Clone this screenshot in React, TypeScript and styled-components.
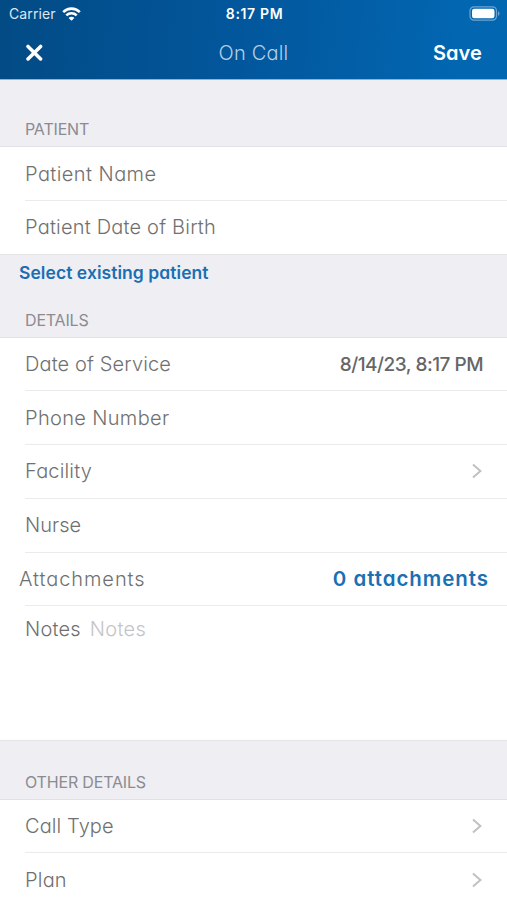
import React from "react";
import styled, { createGlobalStyle } from "styled-components";

const GlobalStyle = createGlobalStyle`
  * { box-sizing: border-box; }
  body { margin: 0; background: #fff; }
`;

const Screen = styled.div`
  width: 507px;
  height: 900px;
  overflow: hidden;
  display: flex;
  flex-direction: column;
  background: #fff;
  font-family: Inter, "Open Sans", sans-serif;
  font-feature-settings: "cv11";
  white-space: nowrap;
`;

const Header = styled.header`
  flex: none;
  height: 80px;
  color: #fff;
  background: linear-gradient(95deg, #024b85 0%, #02569b 45%, #0266b1 90%);
  border-bottom: 1px solid #8fb3d2;
`;

const StatusBar = styled.div`
  height: 27px;
  padding: 0 7px 0 9px;
  display: grid;
  grid-template-columns: 1fr auto 1fr;
  align-items: center;
  font-size: 14px;
  font-feature-settings: normal;
`;

const Carrier = styled.div`
  display: flex;
  align-items: center;
  gap: 6px;
  letter-spacing: 0.1px;
  color: #dce8f3;
`;

const Clock = styled.div`
  font-weight: 600;
  letter-spacing: 0.65px;
`;

const Battery = styled.svg`
  justify-self: end;
`;

const NavBar = styled.nav`
  height: 52px;
  padding: 0 25px;
  display: grid;
  grid-template-columns: 1fr auto 1fr;
  align-items: center;
  font-size: 20px;
`;

const Title = styled.div`
  font-weight: 300;
  letter-spacing: 0.2px;
  color: #b5cfe6;
`;

const Save = styled.div`
  justify-self: end;
  font-weight: 600;
  letter-spacing: 0.1px;
`;

const SectionHeader = styled.div<{ $height: number }>`
  flex: none;
  height: ${(p) => p.$height}px;
  padding: 0 0 7px 25px;
  display: flex;
  align-items: flex-end;
  background: #efeef3;
  border-bottom: 1px solid #e2e2e5;
  color: #8b8b90;
  font-size: 16px;
  line-height: 20px;
  letter-spacing: -0.17px;
  font-feature-settings: normal;
`;

const Existing = styled.div`
  flex: none;
  height: 37px;
  padding-left: 19px;
  background: #efeef3;
  border-top: 1px solid #e4e4e7;
  color: #196fb3;
  font-size: 17.5px;
  font-weight: 600;
  line-height: 36px;
  letter-spacing: 0.06px;
`;

const List = styled.div`
  flex: none;
  padding-left: 25px;
`;

const Row = styled.div<{ $height?: number }>`
  height: ${(p) => p.$height ?? 53.75}px;
  padding-right: 24px;
  display: flex;
  align-items: center;
  justify-content: space-between;
  font-size: 20px;
  & + & { border-top: 1px solid #ebebed; }
`;

const Label = styled.span<{ $spacing: number; $outdent?: boolean }>`
  color: #707070;
  font-weight: 300;
  letter-spacing: ${(p) => p.$spacing}px;
  margin-left: ${(p) => (p.$outdent ? -6 : 0)}px;
`;

const DateValue = styled.span`
  padding-top: 1px;
  color: #666;
  font-size: 19px;
  font-weight: 500;
  letter-spacing: -0.5px;
`;

const LinkValue = styled.span`
  margin-right: -6px;
  color: #1a70b3;
  font-size: 20.5px;
  font-weight: 600;
  letter-spacing: 0.95px;
`;

const NotesRow = styled(Row)`
  height: 134.6px;
  padding-top: 11px;
  justify-content: flex-start;
  align-items: flex-start;
  gap: 9px;
  line-height: 24px;
`;

const Placeholder = styled.span`
  color: #c4c4c8;
  font-weight: 300;
  letter-spacing: 0.3px;
  font-feature-settings: normal;
`;

const OtherHeader = styled(SectionHeader)`
  border-top: 1px solid #e4e4e7;
`;

const Chevron = () => (
  <svg width="12" height="16" viewBox="0 0 12 16" fill="none" stroke="#c1c1c4" strokeWidth="2">
    <path d="M2 1.4 9.4 8 2 14.6" />
  </svg>
);

const Wifi = () => (
  <svg width="19" height="14" viewBox="0 0 19 14" fill="none" stroke="#fff" strokeWidth="2.6">
    <path d="M1.2 5.1C5.8.5 13.2.5 17.8 5.1M4.3 8.4c2.9-2.8 7.5-2.8 10.4 0" />
    <path d="M9.5 13.8 6.6 10.9c1.6-1.5 4.2-1.5 5.8 0z" fill="#fff" stroke="none" />
  </svg>
);

const Close = () => (
  <svg width="18" height="18" viewBox="0 0 18 18" fill="none" stroke="#fff" strokeWidth="3.5" strokeLinecap="round">
    <path d="M3 2.4l12.6 12.6M15.6 2.4 3 15" />
  </svg>
);

export default function App() {
  return (
    <Screen>
      <GlobalStyle />
      <Header>
        <StatusBar>
          <Carrier>Carrier <Wifi /></Carrier>
          <Clock>8:17 PM</Clock>
          <Battery width="31" height="15" viewBox="0 0 31 15">
            <rect x="1" y="0.8" width="26.5" height="13.4" rx="4" fill="none" stroke="#6fa5d2" strokeWidth="1.2" />
            <rect x="3" y="2.8" width="22.5" height="9.4" rx="2.2" fill="#fff" />
            <path d="M29 5.2c2 .8 2 3.8 0 4.6z" fill="#6fa5d2" />
          </Battery>
        </StatusBar>
        <NavBar>
          <Close />
          <Title>On Call</Title>
          <Save>Save</Save>
        </NavBar>
      </Header>

      <SectionHeader $height={67}>PATIENT</SectionHeader>
      <List>
        <Row $height={53}><Label $spacing={0.43}>Patient Name</Label></Row>
        <Row><Label $spacing={0.2}>Patient Date of Birth</Label></Row>
      </List>
      <Existing>Select existing patient</Existing>

      <SectionHeader $height={47}>DETAILS</SectionHeader>
      <List>
        <Row $height={52.5}>
          <Label $spacing={0.13}>Date of Service</Label>
          <DateValue>8/14/23, 8:17 PM</DateValue>
        </Row>
        <Row><Label $spacing={0.34}>Phone Number</Label></Row>
        <Row><Label $spacing={0.16}>Facility</Label><Chevron /></Row>
        <Row><Label $spacing={0}>Nurse</Label></Row>
        <Row>
          <Label $spacing={0.92} $outdent>Attachments</Label>
          <LinkValue>0 attachments</LinkValue>
        </Row>
        <NotesRow>
          <Label $spacing={0.2}>Notes</Label>
          <Placeholder>Notes</Placeholder>
        </NotesRow>
      </List>

      <OtherHeader $height={60}>OTHER DETAILS</OtherHeader>
      <List>
        <Row $height={52.5}><Label $spacing={0.1}>Call Type</Label><Chevron /></Row>
        <Row><Label $spacing={0.2}>Plan</Label><Chevron /></Row>
      </List>
    </Screen>
  );
}
